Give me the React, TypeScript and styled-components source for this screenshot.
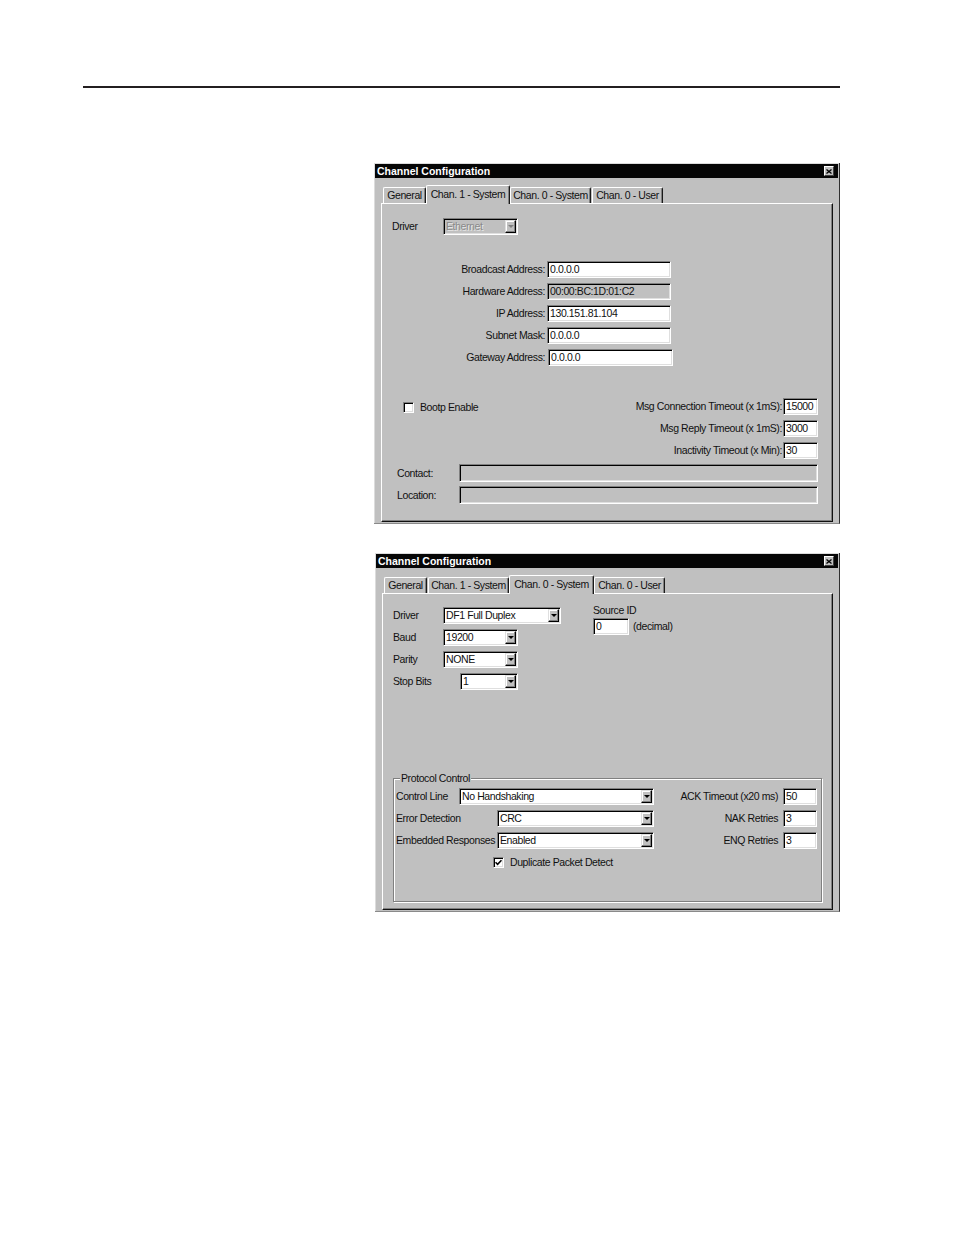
import React from "react";
import styled, { createGlobalStyle } from "styled-components";

const UI = `"Liberation Sans", Arial, sans-serif`;

const GlobalStyle = createGlobalStyle`
  html, body { margin: 0; padding: 0; background: #ffffff; }
  body { font-family: ${UI}; }
`;

const Page = styled.div`
  width: 954px;
  min-height: 1235px;
  box-sizing: border-box;
  padding-top: 86px;
`;

const Rule = styled.div`
  margin-left: 83px;
  width: 757px;
  height: 2px;
  background: #231f20;
`;

const Figures = styled.div`
  margin: 75px 0 0 374px;
  display: flex;
  flex-direction: column;
  gap: 29px;
`;

const Dialog = styled.section<{ $w: number; $h: number; $shift?: number }>`
  box-sizing: border-box;
  width: ${(p) => p.$w}px;
  height: ${(p) => p.$h}px;
  margin-left: ${(p) => p.$shift ?? 0}px;
  padding: 1px 1px 0 1px;
  background: #c0c0c0;
  border-right: 1px solid #303030;
  border-bottom: 1px solid #8a8a8a;
  box-shadow: inset 1px 1px 0 #dcdcdc;
  display: flex;
  flex-direction: column;
  font-family: ${UI};
  font-size: 10.5px;
  letter-spacing: -0.4px;
  color: #111;
`;

const TitleBar = styled.header`
  height: 14px;
  flex: none;
  background: #060606;
  display: flex;
  align-items: center;
  justify-content: space-between;
  padding: 0 4px 0 2px;
`;

const TitleText = styled.span`
  font-family: "Liberation Sans", Arial, sans-serif;
  font-weight: bold;
  font-size: 10.5px;
  letter-spacing: 0;
  line-height: 12px;
  color: #ffffff;
  white-space: nowrap;
`;

const CloseButton = styled.span`
  box-sizing: border-box;
  width: 10px;
  height: 10px;
  background: #c0c0c0;
  border-top: 1px solid #ffffff;
  border-left: 1px solid #ffffff;
  border-right: 1px solid #404040;
  border-bottom: 1px solid #404040;
  display: flex;
  align-items: center;
  justify-content: center;
`;

const DialogBody = styled.div`
  flex: 1;
  display: flex;
  flex-direction: column;
  padding: 7px 5px 1px 6px;
  min-height: 0;
`;

const TabStrip = styled.div`
  height: 18px;
  flex: none;
  display: flex;
  align-items: flex-end;
  gap: 1px;
  padding-left: 2px;
  position: relative;
  z-index: 1;
`;

const Tab = styled.div<{ $w: number; $active?: boolean }>`
  box-sizing: border-box;
  width: ${(p) => p.$w}px;
  height: ${(p) => (p.$active ? 19 : 16)}px;
  margin: ${(p) => (p.$active ? "0 -1px -1px -1px" : "0")};
  background: #c0c0c0;
  border-top: 1px solid #ffffff;
  border-left: 1px solid #ffffff;
  border-right: 1px solid #1a1a1a;
  border-top-left-radius: 2px;
  border-top-right-radius: 2px;
  box-shadow: inset -1px 0 0 #808080;
  display: flex;
  align-items: center;
  justify-content: center;
  padding-bottom: ${(p) => (p.$active ? 1 : 0)}px;
  line-height: 13px;
  white-space: nowrap;
`;

const Panel = styled.div<{ $pad: string }>`
  flex: 1;
  box-sizing: border-box;
  border-top: 1px solid #ffffff;
  border-left: 1px solid #ffffff;
  border-right: 1px solid #101010;
  border-bottom: 1px solid #101010;
  box-shadow: inset -1px -1px 0 #808080;
  padding: ${(p) => p.$pad};
  display: flex;
  flex-direction: column;
`;

const Label = styled.span<{ $w?: number; $end?: boolean }>`
  display: inline-block;
  ${(p) => (p.$w ? `width: ${p.$w}px; flex: none;` : "")}
  justify-self: ${(p) => (p.$end ? "end" : "start")};
  line-height: 13px;
  white-space: nowrap;
`;

const FieldBox = styled.div<{ $w: number; $h?: number; $gray?: boolean; $dim?: boolean; $ml?: number }>`
  box-sizing: border-box;
  flex: none;
  width: ${(p) => p.$w}px;
  height: ${(p) => p.$h ?? 17}px;
  margin-left: ${(p) => p.$ml ?? 0}px;
  background: ${(p) => (p.$gray ? "#c0c0c0" : "#ffffff")};
  border-top: 1px solid #808080;
  border-left: 1px solid #808080;
  border-right: 1px solid #ffffff;
  border-bottom: 1px solid #ffffff;
  box-shadow: inset 1px 1px 0 #000000, inset -1px -1px 0 #dfdfdf;
  padding: 0 1px 0 2px;
  display: flex;
  align-items: center;
  justify-content: space-between;
  line-height: 13px;
  white-space: nowrap;
  overflow: hidden;
  color: ${(p) => (p.$dim ? "#8a8a8a" : "#111")};
  text-shadow: ${(p) => (p.$dim ? "1px 1px 0 #e6e6e6" : "none")};
`;

const DropButton = styled.span`
  box-sizing: border-box;
  flex: none;
  width: 11px;
  height: 13px;
  background: #c0c0c0;
  border-top: 1px solid #dfdfdf;
  border-left: 1px solid #dfdfdf;
  border-right: 1px solid #000000;
  border-bottom: 1px solid #000000;
  box-shadow: inset -1px -1px 0 #808080, inset 1px 1px 0 #ffffff;
  display: flex;
  align-items: center;
  justify-content: center;
`;

const Arrow = styled.span<{ $dim?: boolean }>`
  width: 0;
  height: 0;
  border-left: 3px solid transparent;
  border-right: 3px solid transparent;
  border-top: 3px solid ${(p) => (p.$dim ? "#808080" : "#000000")};
`;

const CheckBoxFrame = styled.span`
  box-sizing: border-box;
  flex: none;
  width: 11px;
  height: 11px;
  background: #ffffff;
  border-top: 1px solid #808080;
  border-left: 1px solid #808080;
  border-right: 1px solid #ffffff;
  border-bottom: 1px solid #ffffff;
  box-shadow: inset 1px 1px 0 #000000, inset -1px -1px 0 #dfdfdf;
  display: flex;
  align-items: center;
  justify-content: center;
`;

const CheckRow = styled.div<{ $ml: number; $mt: number }>`
  display: flex;
  align-items: center;
  gap: 6px;
  margin: ${(p) => p.$mt}px 0 0 ${(p) => p.$ml}px;
`;

const InlineRow = styled.div`
  display: flex;
  align-items: center;
  height: 17px;
`;

const AddressGrid = styled.div`
  display: grid;
  grid-template-columns: 153px auto;
  column-gap: 2px;
  row-gap: 5px;
  align-items: center;
  justify-items: start;
  margin-top: 26px;
`;

const OptionsRow = styled.div`
  display: flex;
  justify-content: space-between;
  align-items: flex-start;
  margin-top: 32px;
`;

const ValueGrid = styled.div<{ $gap: number }>`
  display: grid;
  grid-template-columns: auto auto;
  column-gap: ${(p) => p.$gap}px;
  row-gap: 5px;
  align-items: center;
`;

const InfoGrid = styled.div`
  display: grid;
  grid-template-columns: 62px 359px;
  row-gap: 4px;
  align-items: center;
  margin: 5px 0 0 5px;
`;

const TopRow = styled.div`
  display: flex;
  align-items: flex-start;
  gap: 32px;
`;

const PortGrid = styled.div`
  display: grid;
  grid-template-columns: 50px auto;
  row-gap: 5px;
  align-items: center;
  justify-items: start;
`;

const SourceBlock = styled.div`
  display: flex;
  flex-direction: column;
  gap: 1px;
  margin-top: -3px;
`;

const SourceRow = styled.div`
  display: flex;
  align-items: center;
  gap: 4px;
`;

const GroupBox = styled.div`
  position: relative;
  box-sizing: border-box;
  height: 124px;
  margin-top: 88px;
  border: 1px solid #808080;
  box-shadow: inset 1px 1px 0 #ffffff, 1px 1px 0 #ffffff;
  padding: 9px 4px 0 2px;
`;

const GroupTitle = styled.span`
  position: absolute;
  top: -7px;
  left: 6px;
  padding: 0 1px;
  background: #c0c0c0;
  line-height: 13px;
  white-space: nowrap;
`;

const GroupContent = styled.div`
  display: flex;
  justify-content: space-between;
  align-items: flex-start;
`;

const LinkColumn = styled.div`
  display: flex;
  flex-direction: column;
  gap: 5px;
`;

type FieldProps = { w: number; value?: string; gray?: boolean; h?: number; ml?: number };

function Field({ w, value = "", gray, h, ml }: FieldProps) {
  return (
    <FieldBox $w={w} $h={h} $gray={gray} $ml={ml}>
      <span>{value}</span>
    </FieldBox>
  );
}

type SelectProps = { w: number; value: string; disabled?: boolean; ml?: number };

function Select({ w, value, disabled, ml }: SelectProps) {
  return (
    <FieldBox $w={w} $gray={disabled} $dim={disabled} $ml={ml}>
      <span>{value}</span>
      <DropButton>
        <Arrow $dim={disabled} />
      </DropButton>
    </FieldBox>
  );
}

function CheckBox({ checked }: { checked?: boolean }) {
  return (
    <CheckBoxFrame>
      {checked && (
        <svg width="7" height="7" viewBox="0 0 7 7">
          <path d="M0.5 3.2 L2.6 5.3 L6.5 1.2" fill="none" stroke="#000" strokeWidth="1.6" />
        </svg>
      )}
    </CheckBoxFrame>
  );
}

function WindowTitle() {
  return (
    <TitleBar>
      <TitleText>Channel Configuration</TitleText>
      <CloseButton>
        <svg width="6" height="5" viewBox="0 0 6 5">
          <path d="M0.5 0.5 L5.5 4.5 M5.5 0.5 L0.5 4.5" stroke="#000" strokeWidth="1.3" />
        </svg>
      </CloseButton>
    </TitleBar>
  );
}

type TabDef = { label: string; w: number };

function Tabs({ tabs, active }: { tabs: TabDef[]; active: number }) {
  return (
    <TabStrip>
      {tabs.map((t, i) => (
        <Tab key={t.label} $w={t.w} $active={i === active}>
          {t.label}
        </Tab>
      ))}
    </TabStrip>
  );
}

const tabsOne: TabDef[] = [
  { label: "General", w: 43 },
  { label: "Chan. 1 - System", w: 84 },
  { label: "Chan. 0 - System", w: 81 },
  { label: "Chan. 0 - User", w: 71 },
];

const tabsTwo: TabDef[] = [
  { label: "General", w: 43 },
  { label: "Chan. 1 - System", w: 81 },
  { label: "Chan. 0 - System", w: 85 },
  { label: "Chan. 0 - User", w: 71 },
];

const addresses = [
  { label: "Broadcast Address:", value: "0.0.0.0" },
  { label: "Hardware Address:", value: "00:00:BC:1D:01:C2", gray: true },
  { label: "IP Address:", value: "130.151.81.104" },
  { label: "Subnet Mask:", value: "0.0.0.0" },
  { label: "Gateway Address:", value: "0.0.0.0", wide: true },
];

const timeouts = [
  { label: "Msg Connection Timeout (x 1mS):", value: "15000" },
  { label: "Msg Reply Timeout (x 1mS):", value: "3000" },
  { label: "Inactivity Timeout (x Min):", value: "30" },
];

const retries = [
  { label: "ACK Timeout (x20 ms)", value: "50" },
  { label: "NAK Retries", value: "3" },
  { label: "ENQ Retries", value: "3" },
];

export default function App() {
  return (
    <>
      <GlobalStyle />
      <Page>
        <Rule />
        <Figures>
          <Dialog $w={466} $h={361}>
            <WindowTitle />
            <DialogBody>
              <Tabs tabs={tabsOne} active={1} />
              <Panel $pad="14px 14px 0 10px">
                <InlineRow>
                  <Label $w={51}>Driver</Label>
                  <Select w={75} value="Ethernet" disabled />
                </InlineRow>
                <AddressGrid>
                  {addresses.map((a) => (
                    <React.Fragment key={a.label}>
                      <Label $end>{a.label}</Label>
                      <Field w={a.wide ? 125 : 124} ml={a.wide ? 1 : 0} value={a.value} gray={a.gray} />
                    </React.Fragment>
                  ))}
                </AddressGrid>
                <OptionsRow>
                  <CheckRow $ml={11} $mt={3}>
                    <CheckBox />
                    <Label>Bootp Enable</Label>
                  </CheckRow>
                  <ValueGrid $gap={1}>
                    {timeouts.map((t) => (
                      <React.Fragment key={t.label}>
                        <Label $end>{t.label}</Label>
                        <Field w={35} value={t.value} />
                      </React.Fragment>
                    ))}
                  </ValueGrid>
                </OptionsRow>
                <InfoGrid>
                  <Label>Contact:</Label>
                  <Field w={359} h={18} gray />
                  <Label>Location:</Label>
                  <Field w={359} h={18} gray />
                </InfoGrid>
              </Panel>
            </DialogBody>
          </Dialog>

          <Dialog $w={465} $h={359} $shift={1}>
            <WindowTitle />
            <DialogBody>
              <Tabs tabs={tabsTwo} active={2} />
              <Panel $pad="13px 10px 0 10px">
                <TopRow>
                  <PortGrid>
                    <Label>Driver</Label>
                    <Select w={118} value="DF1 Full Duplex" />
                    <Label>Baud</Label>
                    <Select w={75} value="19200" />
                    <Label>Parity</Label>
                    <Select w={75} value="NONE" />
                    <Label>Stop Bits</Label>
                    <Select w={58} value="1" ml={17} />
                  </PortGrid>
                  <SourceBlock>
                    <Label>Source ID</Label>
                    <SourceRow>
                      <Field w={36} value="0" />
                      <Label>(decimal)</Label>
                    </SourceRow>
                  </SourceBlock>
                </TopRow>
                <GroupBox>
                  <GroupTitle>Protocol Control</GroupTitle>
                  <GroupContent>
                    <LinkColumn>
                      <InlineRow>
                        <Label $w={63}>Control Line</Label>
                        <Select w={195} value="No Handshaking" />
                      </InlineRow>
                      <InlineRow>
                        <Label $w={101}>Error Detection</Label>
                        <Select w={157} value="CRC" />
                      </InlineRow>
                      <InlineRow>
                        <Label $w={101}>Embedded Responses</Label>
                        <Select w={157} value="Enabled" />
                      </InlineRow>
                      <CheckRow $ml={97} $mt={2}>
                        <CheckBox checked />
                        <Label>Duplicate Packet Detect</Label>
                      </CheckRow>
                    </LinkColumn>
                    <ValueGrid $gap={5}>
                      {retries.map((r) => (
                        <React.Fragment key={r.label}>
                          <Label $end>{r.label}</Label>
                          <Field w={34} value={r.value} />
                        </React.Fragment>
                      ))}
                    </ValueGrid>
                  </GroupContent>
                </GroupBox>
              </Panel>
            </DialogBody>
          </Dialog>
        </Figures>
      </Page>
    </>
  );
}
